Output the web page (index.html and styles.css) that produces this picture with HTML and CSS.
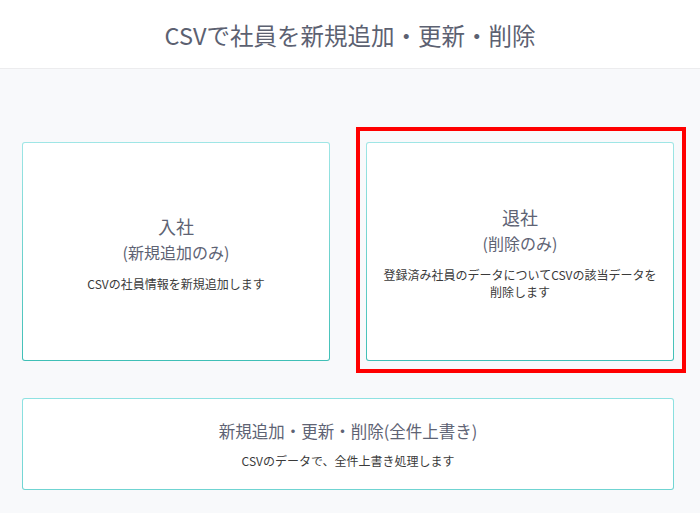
FILE: index.html
```html
<!DOCTYPE html>
<html lang="ja">
<head>
<meta charset="utf-8">
<title>CSVで社員を新規追加・更新・削除</title>
<link rel="stylesheet" href="styles.css">
</head>
<body>
<header class="page-header">
  <h1 class="page-title">CSVで社員を新規追加・更新・削除</h1>
</header>
<main class="content">
  <div class="row">
    <div class="card">
      <div class="card-title">入社</div>
      <div class="card-sub">(新規追加のみ)</div>
      <p class="card-desc">CSVの社員情報を新規追加します</p>
    </div>
    <div class="card card-highlight">
      <div class="card-title">退社</div>
      <div class="card-sub">(削除のみ)</div>
      <p class="card-desc">登録済み社員のデータについてCSVの該当データを<br>削除します</p>
      <span class="highlight-frame"></span>
    </div>
  </div>
  <div class="card card-wide">
    <div class="card-title wide-title">新規追加・更新・削除(全件上書き)</div>
    <p class="card-desc">CSVのデータで、全件上書き処理します</p>
  </div>
</main>
</body>
</html>
```

FILE: styles.css
```css
html, body {
  margin: 0;
  padding: 0;
}
body {
  background: #f8f9fb;
  font-family: "Noto Sans CJK JP", "Noto Sans", sans-serif;
  color: #333;
  height: 513px;
  overflow: hidden;
}
.page-header {
  background: #fff;
  height: 68px;
  border-bottom: 1px solid #ececee;
  display: flex;
  align-items: center;
  justify-content: center;
}
.page-title {
  margin: 0;
  font-size: 23.5px;
  font-weight: 400;
  color: #5c6171;
  line-height: 32px;
  padding-top: 2px;
}
.content {
  padding: 73px 26px 0 22px;
  display: flex;
  flex-direction: column;
  gap: 37px;
}
.row {
  display: grid;
  grid-template-columns: 308px 308px;
  gap: 36px;
}
.card {
  position: relative;
  box-sizing: border-box;
  height: 219px;
  border: 1px solid transparent;
  border-radius: 3px;
  background:
    linear-gradient(#fff, #fff) padding-box,
    linear-gradient(#9fe6e6, #3fbfb6) border-box;
  display: flex;
  flex-direction: column;
  align-items: center;
  justify-content: center;
  text-align: center;
}
.card-title {
  font-size: 18px;
  line-height: 28px;
  color: #5e6374;
}
.card-sub {
  font-size: 16px;
  line-height: 24px;
  color: #5e6374;
}
.card-desc {
  margin: 11px 0 0;
  font-size: 12px;
  line-height: 17px;
  color: #3a3a3a;
}
.card-wide {
  height: 92px;
  background:
    linear-gradient(#fff, #fff) padding-box,
    linear-gradient(#8fe2e2, #6fd4d2) border-box;
}
.wide-title {
  font-size: 16.5px;
  line-height: 24px;
}
.card-wide .card-desc {
  margin-top: 9px;
}
.highlight-frame {
  position: absolute;
  left: -11px;
  top: -16px;
  right: -13px;
  bottom: -13px;
  border: 4px solid #ff0000;
  pointer-events: none;
}
```
